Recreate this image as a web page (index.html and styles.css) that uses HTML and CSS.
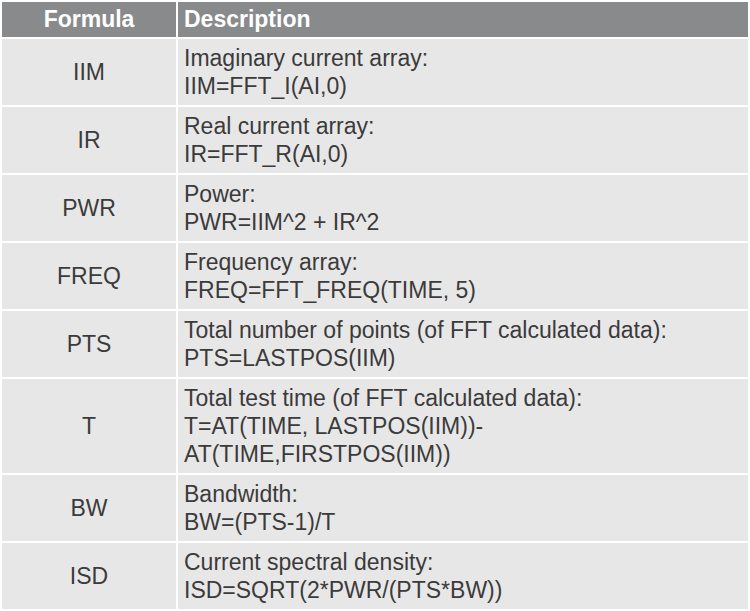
FILE: index.html
```html
<!DOCTYPE html>
<html>
<head>
<meta charset="utf-8">
<link rel="stylesheet" href="styles.css">
</head>
<body>
<table class="ftable">
  <thead>
    <tr><th class="col-formula">Formula</th><th class="col-desc">Description</th></tr>
  </thead>
  <tbody>
    <tr><td class="formula">IIM</td><td class="desc">Imaginary current array:<br>IIM=FFT_I(AI,0)</td></tr>
    <tr><td class="formula">IR</td><td class="desc">Real current array:<br>IR=FFT_R(AI,0)</td></tr>
    <tr><td class="formula">PWR</td><td class="desc">Power:<br>PWR=IIM^2 + IR^2</td></tr>
    <tr><td class="formula">FREQ</td><td class="desc">Frequency array:<br>FREQ=FFT_FREQ(TIME, 5)</td></tr>
    <tr><td class="formula">PTS</td><td class="desc">Total number of points (of FFT calculated data):<br>PTS=LASTPOS(IIM)</td></tr>
    <tr><td class="formula">T</td><td class="desc">Total test time (of FFT calculated data):<br>T=AT(TIME, LASTPOS(IIM))-<br>AT(TIME,FIRSTPOS(IIM))</td></tr>
    <tr><td class="formula">BW</td><td class="desc">Bandwidth:<br>BW=(PTS-1)/T</td></tr>
    <tr><td class="formula">ISD</td><td class="desc">Current spectral density:<br>ISD=SQRT(2*PWR/(PTS*BW))</td></tr>
  </tbody>
</table>
</body>
</html>
```
FILE: styles.css
```css
html, body {
  margin: 0;
  padding: 0;
  background: #ffffff;
}
.ftable {
  width: 750px;
  border-collapse: separate;
  border-spacing: 2px;
  font-family: "Liberation Sans", Arial, sans-serif;
  font-size: 23px;
  line-height: 28px;
  color: #3b3b3b;
}
.ftable th {
  background: #898a8c;
  color: #ffffff;
  font-weight: bold;
  padding: 3px 6px 4px 6px;
  height: 28px;
}
.col-formula {
  width: 162px;
  text-align: center;
}
.col-desc {
  text-align: left;
}
.ftable td {
  background: #e8e7e7;
  padding: 5px 6px;
  vertical-align: middle;
}
.formula {
  text-align: center;
}
.desc {
  text-align: left;
}
```
